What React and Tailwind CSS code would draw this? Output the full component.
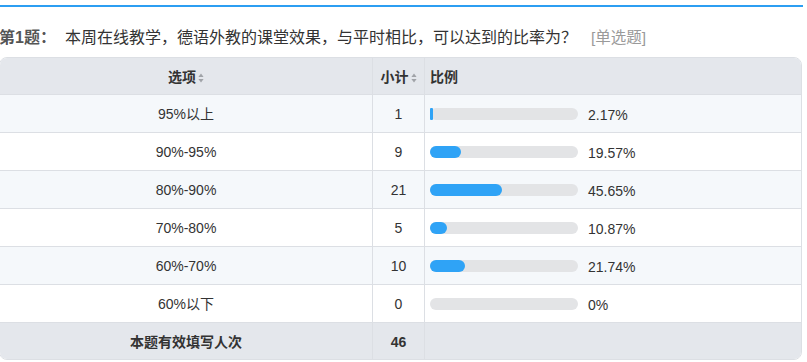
import React from 'react';

const rows = [
    { label: '95%以上', count: 1, pct: '2.17%', fill: 3 },
    { label: '90%-95%', count: 9, pct: '19.57%', fill: 31 },
    { label: '80%-90%', count: 21, pct: '45.65%', fill: 72 },
    { label: '70%-80%', count: 5, pct: '10.87%', fill: 17 },
    { label: '60%-70%', count: 10, pct: '21.74%', fill: 35 },
    { label: '60%以下', count: 0, pct: '0%', fill: 0 },
];

const SortIcon = () => (
    <svg width="6" height="10" viewBox="0 0 6 10" className="ml-[2px]">
        <path d="M3 0.5 L5.6 4 H0.4 Z" fill="#a0a3a8" />
        <path d="M3 9.5 L5.6 6 H0.4 Z" fill="#a0a3a8" />
    </svg>
);

const App = () => {
    return (
        <div
            className="w-[807px] h-[362px] bg-white overflow-hidden text-[#333]"
            style={{ fontFamily: '"Liberation Sans", Arial, "Noto Sans CJK SC", sans-serif' }}
        >
            {/* top rule */}
            <div className="mt-[5px] h-[2px] w-[803px] bg-[#2c9ef2]" />

            {/* question title */}
            <div className="flex items-center h-[20px] mt-[21px] -ml-[1px] text-[16px] leading-[20px]">
                <span className="font-bold text-[#555]">第1题：</span>
                <span className="ml-[9px] text-[16px]">本周在线教学，德语外教的课堂效果，与平时相比，可以达到的比率为？</span>
                <span className="ml-[14px] text-[#9a9a9a] text-[15.5px]">[单选题]</span>
            </div>

            {/* result table */}
            <div className="mt-[9px] w-[803px] -ml-[1px] border border-[#dcdfe4] rounded-lg overflow-hidden text-[14px]">
                {/* header */}
                <div className="grid grid-cols-[373px_52px_1fr] h-[37px] bg-[#e4e7ec] font-bold border-b border-[#dcdfe4]">
                    <div className="flex items-center justify-center pt-[3px] border-r border-[#dcdfe4]">
                        选项<SortIcon />
                    </div>
                    <div className="flex items-center justify-center pt-[3px] border-r border-[#dcdfe4]">
                        小计<SortIcon />
                    </div>
                    <div className="flex items-center pt-[3px] pl-[5px]">比例</div>
                </div>

                {rows.map((r, i) => (
                    <div
                        key={r.label}
                        className={`grid grid-cols-[373px_52px_1fr] h-[38px] border-b border-[#dcdfe4] ${i % 2 === 0 ? 'bg-[#f5f8fb]' : 'bg-white'}`}
                    >
                        <div className="flex items-center justify-center pt-[2px] border-r border-[#dcdfe4]">{r.label}</div>
                        <div className="flex items-center justify-center pt-[2px] border-r border-[#dcdfe4]">{r.count}</div>
                        <div className="flex items-center pl-[5px]">
                            <div className="w-[148px] h-[12px] rounded-full bg-[#e3e4e6]">
                                {r.fill > 0 && (
                                    <div
                                        className={`h-full bg-[#2fa3f6] ${r.fill < 8 ? 'rounded-[1px]' : 'rounded-full'}`}
                                        style={{ width: r.fill }}
                                    />
                                )}
                            </div>
                            <span className="ml-[10px] mt-[4px]">{r.pct}</span>
                        </div>
                    </div>
                ))}

                {/* footer */}
                <div className="grid grid-cols-[373px_52px_1fr] h-[36px] bg-[#e4e7ec] font-bold">
                    <div className="flex items-center justify-center pt-[2px] border-r border-[#dcdfe4]">本题有效填写人次</div>
                    <div className="flex items-center justify-center pt-[2px] border-r border-[#dcdfe4]">46</div>
                    <div />
                </div>
            </div>
        </div>
    );
};

export default App;
